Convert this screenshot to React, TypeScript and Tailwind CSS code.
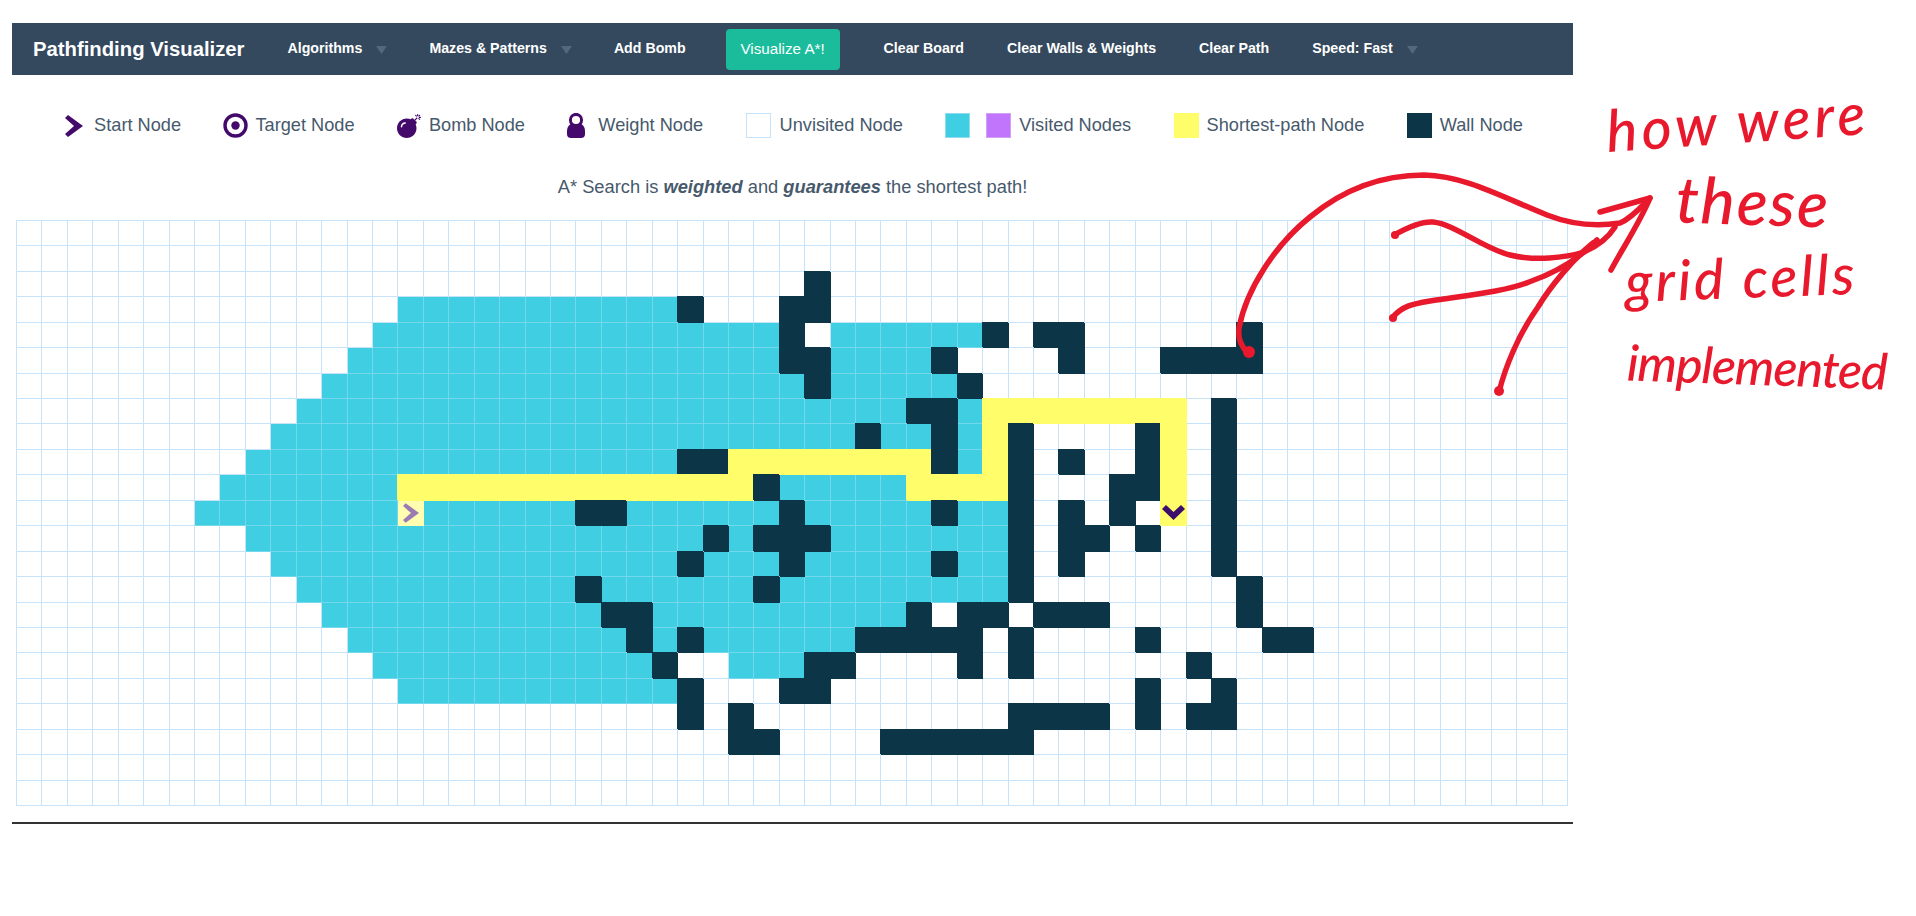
import { FaBomb } from "react-icons/fa";

const COLS = 61;
const ROWS = 23;

// wall columns per row
const walls: Record<number, number[]> = {
  2: [31],
  3: [26, 30, 31],
  4: [30, 38, 40, 41, 48],
  5: [30, 31, 36, 41, 45, 46, 47, 48],
  6: [31, 37],
  7: [35, 36, 47],
  8: [33, 36, 39, 44, 47],
  9: [26, 27, 36, 39, 41, 44, 47],
  10: [29, 39, 43, 44, 47],
  11: [22, 23, 30, 36, 39, 41, 43, 47],
  12: [27, 29, 30, 31, 39, 41, 42, 44, 47],
  13: [26, 30, 36, 39, 41, 47],
  14: [22, 29, 39, 48],
  15: [23, 24, 35, 37, 38, 40, 41, 42, 48],
  16: [24, 26, 33, 34, 35, 36, 37, 39, 44, 49, 50],
  17: [25, 31, 32, 37, 39, 46],
  18: [26, 30, 31, 44, 47],
  19: [26, 28, 39, 40, 41, 42, 44, 46, 47],
  20: [28, 29, 34, 35, 36, 37, 38, 39],
};

// visited ranges per row
const visited: Record<number, [number, number][]> = {
  3: [[15, 25]],
  4: [[14, 29], [32, 37]],
  5: [[13, 29], [32, 35]],
  6: [[12, 30], [32, 36]],
  7: [[11, 34], [37, 37]],
  8: [[10, 35], [37, 37]],
  9: [[9, 37]],
  10: [[8, 34]],
  11: [[7, 38]],
  12: [[9, 38]],
  13: [[10, 38]],
  14: [[11, 38]],
  15: [[12, 34]],
  16: [[13, 32]],
  17: [[14, 24], [28, 30]],
  18: [[15, 25]],
};

const path: Record<number, [number, number][]> = {
  7: [[38, 45]],
  8: [[38, 38], [45, 45]],
  9: [[28, 35], [38, 38], [45, 45]],
  10: [[15, 28], [35, 38], [45, 45]],
  11: [[45, 45]],
};

const inRange = (ranges: [number, number][] | undefined, c: number) =>
  !!ranges && ranges.some(([a, b]) => c >= a && c <= b);

function Caret() {
  return (
    <svg width="11" height="8" viewBox="0 0 11 8" className="ml-[14px] mt-[3px]">
      <polygon points="0,0 11,0 5.5,8" fill="#54677b" />
    </svg>
  );
}

function StartIcon({ className }: { className?: string }) {
  return (
    <svg viewBox="0 0 18 22" className={className}>
      <polygon points="0,3 3,0 18,11 3,22 0,19 9,11" fill="currentColor" />
    </svg>
  );
}

function TargetIcon() {
  return (
    <svg width="25" height="25" viewBox="0 0 25 25">
      <circle cx="12.5" cy="12.5" r="10.5" fill="none" stroke="#440a6b" strokeWidth="3.4" />
      <circle cx="12.5" cy="12.5" r="4.2" fill="#440a6b" />
    </svg>
  );
}

function WeightIcon() {
  return (
    <svg width="18" height="25" viewBox="0 0 18 25">
      <circle cx="9" cy="7" r="5.6" fill="none" stroke="#440a6b" strokeWidth="3" />
      <path d="M3.5 11 H14.5 Q18 13.5 18 18 V21 Q18 25 14 25 H4 Q0 25 0 21 V18 Q0 13.5 3.5 11 Z" fill="#440a6b" />
    </svg>
  );
}

function Legend({ icon, label, gap }: { icon: React.ReactNode; label: string; gap: string }) {
  return (
    <div className={`flex items-center ${gap}`}>
      {icon}
      <span>{label}</span>
    </div>
  );
}

function Swatch({ color }: { color: string }) {
  return <div className={`w-[25px] h-[25px] border ${color}`} />;
}

function Cell({ r, c }: { r: number; c: number }) {
  const isWall = walls[r]?.includes(c);
  const isPath = inRange(path[r], c);
  const isVisited = inRange(visited[r], c);
  const isStart = r === 11 && c === 15;
  const isTarget = r === 11 && c === 45;

  let cls = "border-[#c6e3fa]";
  if (isWall) cls = "bg-[#0c3547] border-[#0c3547] shadow-[-1px_-1px_0_0_#0c3547]";
  else if (isStart) cls = "bg-[#fefdb0] border-[#fefdb0]";
  else if (isPath) cls = "bg-[#fffe6a] border-[#fffe6a] shadow-[-1px_-1px_0_0_#fffe6a]";
  else if (isVisited) cls = "bg-[#40cee3] border-[#74d8ec]";

  return (
    <div className={`relative flex items-center justify-center border-r border-b ${cls}`}>
      {isStart && <StartIcon className="w-[16px] h-[22px] text-[#9c7bb4]" />}
      {isTarget && (
        <svg width="23" height="16" viewBox="0 0 23 16" className="mb-[2px]">
          <polygon points="0,5 4,1 11.5,8 19,1 23,5 11.5,16" fill="#3c0d6b" />
        </svg>
      )}
    </div>
  );
}

function Annotation() {
  return (
    <>
      <svg width="1916" height="916" viewBox="0 0 1916 916" fill="none" className="absolute left-0 top-0 pointer-events-none">
        <g stroke="#e8192c" strokeWidth="5.5" strokeLinecap="round" strokeLinejoin="round">
          <path d="M1248 353 C1240 345 1238 338 1239 328 C1246 290 1275 245 1310 217 C1345 188 1385 175 1424 175 C1465 176 1500 196 1547 215 C1575 226 1600 226 1620 223 C1632 218 1642 206 1650 198" />
          <path d="M1600 212 L1650 198 C1640 222 1624 246 1611 270" />
          <path d="M1394 235 C1410 226 1422 221 1433 222 C1455 224 1482 248 1510 255 C1535 261 1565 258 1584 252 C1598 246 1608 238 1615 227" />
          <path d="M1392 318 C1402 306 1412 304 1430 301 C1460 296 1505 292 1529 282 C1555 273 1580 258 1597 240" />
          <path d="M1499 392 C1505 368 1518 335 1538 307 C1550 287 1572 260 1593 243" />
        </g>
        <circle cx="1249" cy="352" r="6" fill="#e8192c" />
        <circle cx="1499" cy="391" r="5" fill="#e8192c" />
        <circle cx="1395" cy="235" r="4" fill="#e8192c" />
        <circle cx="1393" cy="318" r="4" fill="#e8192c" />
      </svg>
      <div className="absolute left-[1606px] top-[96px] -rotate-[4deg] text-[58px] leading-[50px] tracking-[4px] text-[#e8192c] font-medium italic whitespace-nowrap [font-family:Lato,sans-serif]">how were</div>
      <div className="absolute left-[1676px] top-[176px] rotate-[2deg] text-[64px] leading-[50px] tracking-[2px] text-[#e8192c] font-medium italic whitespace-nowrap [font-family:Lato,sans-serif]">these</div>
      <div className="absolute left-[1625px] top-[252px] -rotate-[2deg] text-[56px] leading-[50px] tracking-[3px] text-[#e8192c] font-medium italic whitespace-nowrap [font-family:Lato,sans-serif]">grid cells</div>
      <div className="absolute left-[1627px] top-[341px] rotate-[2deg] text-[50px] leading-[50px] tracking-[-1px] text-[#e8192c] font-medium italic whitespace-nowrap [font-family:Lato,sans-serif]">implemented</div>
    </>
  );
}

export default function App() {
  const cells = [];
  for (let r = 0; r < ROWS; r++) {
    for (let c = 0; c < COLS; c++) {
      cells.push(<Cell key={`${r}-${c}`} r={r} c={c} />);
    }
  }

  return (
    <div className="relative h-[916px] w-[1916px] overflow-hidden bg-white [font-family:'Liberation_Sans',Arial,sans-serif]">
      <div className="ml-3 w-[1561px] pt-[23px]">
        {/* Navbar */}
        <nav className="flex h-[52px] items-center gap-[42px] bg-[#34495e] pl-[21px] font-bold text-[14.2px] text-white">
          <span className="text-[20.3px]">Pathfinding Visualizer</span>
          <span className="ml-px flex items-center">Algorithms<Caret /></span>
          <span className="flex items-center">Mazes &amp; Patterns<Caret /></span>
          <span className="mr-[-2px]">Add Bomb</span>
          <button className="mr-[2px] h-[41px] w-[114px] rounded bg-[#1abc9c] text-center font-normal text-[15.2px] text-white">Visualize A*!</button>
          <span>Clear Board</span>
          <span className="ml-px">Clear Walls &amp; Weights</span>
          <span className="ml-px">Clear Path</span>
          <span className="ml-px flex items-center">Speed: Fast<Caret /></span>
        </nav>

        {/* Legend */}
        <div className="mt-[38px] flex h-[25px] items-center justify-center gap-[42.4px] pl-[3px] text-[18.2px] text-[#47596c]">
          <Legend gap="gap-[11px]" icon={<StartIcon className="w-[18px] h-[22px] text-[#440a6b]" />} label="Start Node" />
          <Legend gap="gap-[7px]" icon={<TargetIcon />} label="Target Node" />
          <Legend gap="gap-[8px]" icon={<FaBomb size={24} color="#440a6b" />} label="Bomb Node" />
          <Legend gap="gap-[13px]" icon={<WeightIcon />} label="Weight Node" />
          <Legend gap="gap-[9px]" icon={<Swatch color="border-[#c6e3fa]" />} label="Unvisited Node" />
          <div className="flex items-center gap-[16px]">
            <Swatch color="bg-[#40cee3] border-[#8fdcee]" />
            <Legend gap="gap-[8px]" icon={<Swatch color="bg-[#c174fc] border-[#cfa0f5]" />} label="Visited Nodes" />
          </div>
          <Legend gap="gap-[8px]" icon={<Swatch color="bg-[#fffe6a] border-[#fffe6a]" />} label="Shortest-path Node" />
          <Legend gap="gap-[8px]" icon={<Swatch color="bg-[#0c3547] border-[#0c3547]" />} label="Wall Node" />
        </div>

        {/* Algorithm description */}
        <p className="mt-[36px] h-[26px] text-center text-[18.3px] leading-[26px] text-[#47596c]">
          A* Search is <b><i>weighted</i></b> and <b><i>guarantees</i></b> the shortest path!
        </p>

        {/* Board */}
        <div className="mt-[20px] ml-[4px] grid h-[586px] w-[1552px] grid-cols-[repeat(61,minmax(0,1fr))] grid-rows-[repeat(23,minmax(0,1fr))] border-t border-l border-[#c6e3fa]">
          {cells}
        </div>

        <hr className="mt-[16px] border-t-2 border-[#333]" />
      </div>

      <Annotation />
    </div>
  );
}
